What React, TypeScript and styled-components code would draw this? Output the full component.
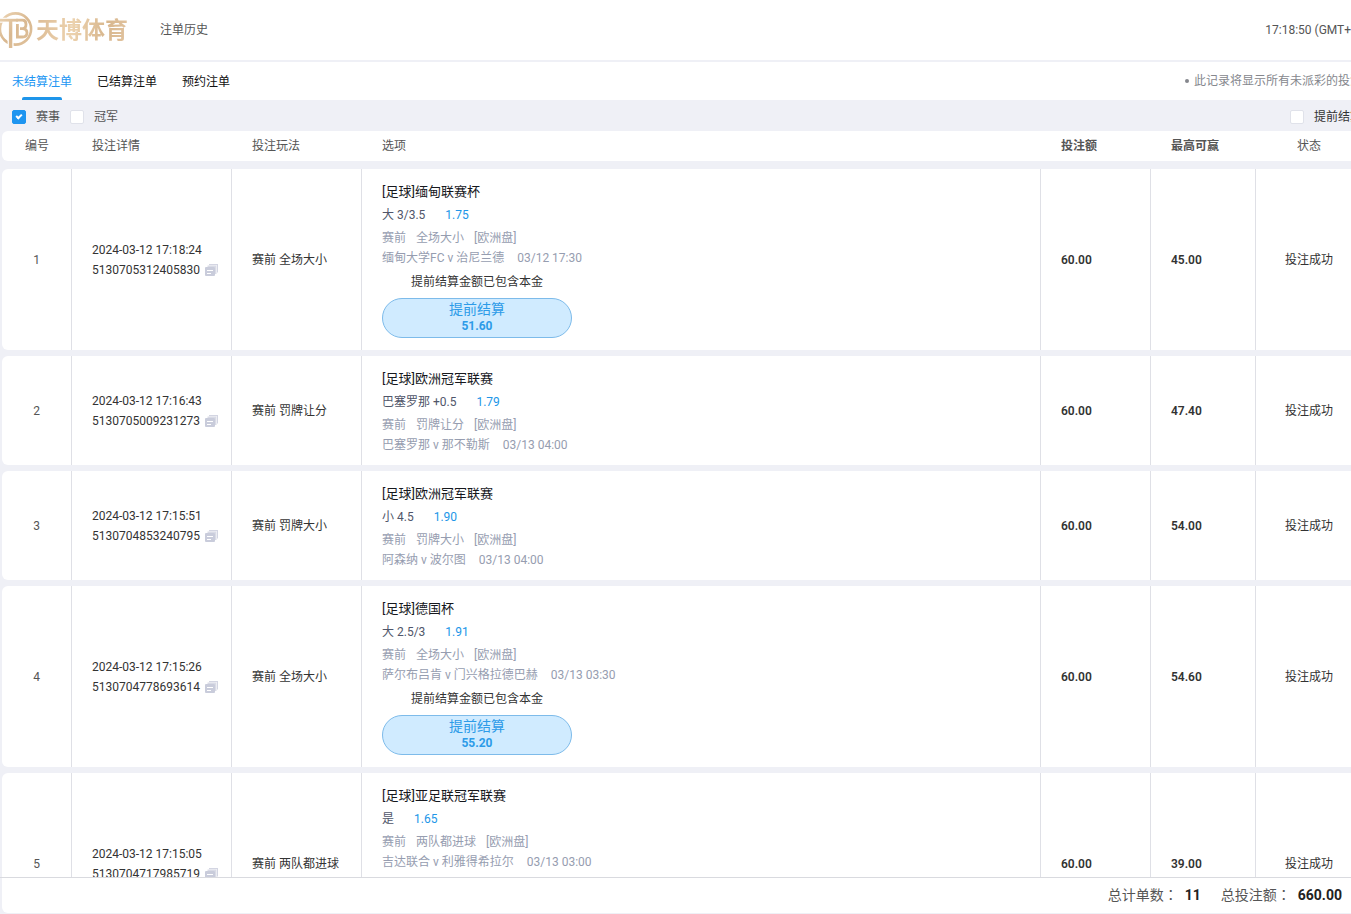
import React from "react";
import styled, { createGlobalStyle, css } from "styled-components";

const GlobalStyle = createGlobalStyle`
  *, *::before, *::after { box-sizing: border-box; }
  body {
    margin: 0;
    background: #eff0f6;
    color: #333;
    font: 12px/20px Roboto, "Noto Sans CJK SC", sans-serif;
  }
  button, input { font: inherit; }
`;

const Viewport = styled.div`
  height: 100vh;
  overflow: hidden;
`;

/* The sheet is slightly wider than the window and runs off its right edge. */
const Page = styled.div`
  display: flex;
  flex-direction: column;
  height: 100%;
  margin-right: -11px;
  padding-bottom: 1px;
  white-space: nowrap;
`;

const Header = styled.header`
  display: flex;
  align-items: center;
  flex: none;
  height: 60px;
  margin-bottom: 2px;
  background: #fff;
  color: #555;
`;

const Brand = styled.a`
  display: flex;
  align-items: center;
  width: 160px;
  text-decoration: none;
`;

const BrandMark = styled.svg`
  flex: none;
  width: 36px;
  height: 40px;
`;

const BrandName = styled.span`
  padding-bottom: 4px;
  font: 700 23px/30px "Noto Sans CJK SC", sans-serif;
  color: transparent;
  background: linear-gradient(100deg, #dcbb94, #ecd2ae 40%, #d8b78e 75%, #e2c4a0);
  background-clip: text;
`;

const PageTitle = styled.h1`
  flex: 1;
  margin: 0;
  font-size: 12px;
  font-weight: 400;
`;

const TabBar = styled.nav`
  display: flex;
  align-items: center;
  flex: none;
  gap: 25px;
  height: 38px;
  padding-left: 12px;
  background: #fff;
`;

const Tab = styled.button<{ $active?: boolean }>`
  display: flex;
  flex-direction: column;
  align-items: center;
  height: 38px;
  padding: 10px 0 0;
  border: 0;
  background: none;
  color: ${(p) => (p.$active ? "#2196f3" : "#111")};
  cursor: pointer;
  ${(p) =>
    p.$active &&
    css`
      &::after {
        content: "";
        width: 40px;
        height: 3px;
        margin-top: 5px;
        border-radius: 2px 2px 0 0;
        background: #1e95ea;
      }
    `}
`;

const Hint = styled.p`
  display: flex;
  align-items: center;
  gap: 5px;
  margin: 0 0 0 auto;
  color: #85878d;
  &::before {
    content: "";
    width: 4px;
    height: 4px;
    border-radius: 50%;
    background: #85878d;
  }
`;

const Filters = styled.div`
  display: flex;
  align-items: center;
  flex: none;
  gap: 10px;
  height: 31px;
  padding: 2px 0 0 12px;
`;

const CheckLabel = styled.label<{ $end?: boolean }>`
  display: flex;
  align-items: center;
  gap: 10px;
  margin-left: ${(p) => (p.$end ? "auto" : "0")};
  color: ${(p) => (p.$end ? "#333" : "#555")};
`;

const CheckBox = styled.input`
  appearance: none;
  display: grid;
  place-items: center;
  width: 14px;
  height: 14px;
  margin: 0;
  border: 1px solid #e0e2ea;
  border-radius: 2px;
  background: #fff;
  &:checked {
    border-color: #1e95f0;
    background: #1e95f0;
  }
  &:checked::after {
    content: "";
    width: 6px;
    height: 4px;
    margin-bottom: 2px;
    border: solid #fff;
    border-width: 0 0 2px 2px;
    transform: rotate(-45deg);
  }
`;

const Table = styled.table`
  display: flex;
  flex-direction: column;
  flex: 1;
  min-height: 0;
  padding-left: 2px;
`;

const TableHead = styled.thead`
  display: block;
  flex: none;
  margin-bottom: 8px;
`;

const TableBody = styled.tbody`
  display: flex;
  flex-direction: column;
  flex: 1;
  gap: 6px;
  min-height: 0;
  overflow: hidden;
`;

const Row = styled.tr`
  display: grid;
  grid-template-columns: 70px 160px 130px 1fr 110px 105px 106px;
  flex: none;
  border-radius: 6px;
  background: #fff;
`;

const HeadCell = styled.th<{ $center?: boolean; $strong?: boolean }>`
  padding: 5px ${(p) => (p.$center ? "0" : "20px")};
  color: #555;
  font-weight: ${(p) => (p.$strong ? 700 : 400)};
  text-align: ${(p) => (p.$center ? "center" : "left")};
`;

const Cell = styled.td<{ $center?: boolean; $strong?: boolean }>`
  display: flex;
  flex-direction: column;
  justify-content: center;
  align-items: ${(p) => (p.$center ? "center" : "flex-start")};
  padding: 0 ${(p) => (p.$center ? "0" : "20px")};
  border-right: 1px solid #dfe0e6;
  font-weight: ${(p) => (p.$strong ? 600 : 400)};
  &:last-child {
    border-right: 0;
  }
`;

const IndexCell = styled(Cell)`
  color: #555;
`;

const SelectionCell = styled(Cell)`
  padding-top: 10px;
  padding-bottom: 10px;
`;

const Ticket = styled.div`
  display: flex;
  align-items: center;
  gap: 5px;
`;

const CopyButton = styled.button`
  display: flex;
  padding: 0;
  border: 0;
  background: none;
  cursor: pointer;
`;

const League = styled.strong`
  color: #16181d;
  font-size: 13px;
  font-weight: 400;
  line-height: 26px;
`;

const Pick = styled.div`
  display: flex;
  gap: 20px;
  margin-bottom: 3px;
  color: #50566a;
`;

const Odds = styled.span`
  color: #2196e8;
`;

const Meta = styled.div<{ $wide?: boolean }>`
  display: flex;
  gap: ${(p) => (p.$wide ? "13px" : "10px")};
  color: #969db0;
`;

const CashOutSlot = styled.div`
  display: flex;
  flex-direction: column;
  align-items: center;
  gap: 6px;
  width: 190px;
  height: 72px;
  padding-top: 4px;
`;

const CashOutButton = styled.button`
  display: flex;
  flex-direction: column;
  align-items: center;
  width: 100%;
  height: 40px;
  padding: 2px 0;
  border: 1px solid #7dbbea;
  border-radius: 20px;
  background: #d0ebff;
  color: #2d9be8;
  font-size: 14px;
  line-height: 17px;
  cursor: pointer;
  b {
    font-size: 12px;
    line-height: 16px;
  }
`;

const Footer = styled.footer`
  flex: none;
  border-top: 1px solid #d9dadf;
  padding-left: 2px;
`;

const Totals = styled.dl`
  display: flex;
  align-items: center;
  justify-content: flex-end;
  gap: 20px;
  height: 35px;
  margin: 0;
  padding: 0 20px 2px 0;
  border-radius: 0 0 6px 6px;
  background: #fff;
  font-size: 14px;
`;

const Total = styled.div`
  display: flex;
  gap: 7px;
  dt {
    color: #555;
  }
  dd {
    margin: 0;
    color: #222;
    font-weight: 700;
  }
`;

/* Full-width colon set in the middle of its square. */
const Colon = styled.span`
  font-family: "Noto Sans CJK TC", sans-serif;
  line-height: 0;
`;

type Bet = {
  time: string;
  ticket: string;
  market: string;
  league: string;
  pick: string;
  odds: string;
  match: string;
  kickoff: string;
  win: string;
  settleable?: boolean;
  cashOut?: string;
};

const bets: Bet[] = [
  { time: "2024-03-12 17:18:24", ticket: "5130705312405830", market: "全场大小", league: "缅甸联赛杯", pick: "大 3/3.5", odds: "1.75", match: "缅甸大学FC v 治尼兰德", kickoff: "03/12 17:30", win: "45.00", settleable: true, cashOut: "51.60" },
  { time: "2024-03-12 17:16:43", ticket: "5130705009231273", market: "罚牌让分", league: "欧洲冠军联赛", pick: "巴塞罗那 +0.5", odds: "1.79", match: "巴塞罗那 v 那不勒斯", kickoff: "03/13 04:00", win: "47.40" },
  { time: "2024-03-12 17:15:51", ticket: "5130704853240795", market: "罚牌大小", league: "欧洲冠军联赛", pick: "小 4.5", odds: "1.90", match: "阿森纳 v 波尔图", kickoff: "03/13 04:00", win: "54.00" },
  { time: "2024-03-12 17:15:26", ticket: "5130704778693614", market: "全场大小", league: "德国杯", pick: "大 2.5/3", odds: "1.91", match: "萨尔布吕肯 v 门兴格拉德巴赫", kickoff: "03/13 03:30", win: "54.60", settleable: true, cashOut: "55.20" },
  { time: "2024-03-12 17:15:05", ticket: "5130704717985719", market: "两队都进球", league: "亚足联冠军联赛", pick: "是", odds: "1.65", match: "吉达联合 v 利雅得希拉尔", kickoff: "03/13 03:00", win: "39.00", settleable: true },
];

const Logo = () => (
  <BrandMark viewBox="0 10 36 40" aria-hidden="true">
    <defs>
      <linearGradient id="gold" gradientUnits="userSpaceOnUse" x1="0" y1="12" x2="32" y2="48">
        <stop offset="0" stopColor="#ecd4b3" />
        <stop offset="0.5" stopColor="#d9b890" />
        <stop offset="1" stopColor="#e0c29c" />
      </linearGradient>
    </defs>
    <g fill="none" stroke="url(#gold)">
      <circle cx="15.500" cy="29" r="15.600" strokeWidth="2.600" />
      <path d="M-1 20.200H18" stroke="#fff" strokeWidth="5" />
      <path d="M10.600 22V49" stroke="#fff" strokeWidth="6" />
      <path d="M-1 20.200H18" strokeWidth="2.800" />
      <path d="M10.600 20V48" strokeWidth="3.400" />
      <path d="M17.400 38V24M16 20.200H22.500Q26 20.200 26 24.200Q26 28.600 22.500 28.600H20M22.500 28.600Q27 28.900 27 32.800Q27 37 22.500 37H16" strokeWidth="2.800" />
    </g>
  </BrandMark>
);

const CopyIcon = () => (
  <svg width="13" height="14" viewBox="0 0 13 14" aria-hidden="true">
    <path d="M4 1H13V9.500H12V2.200H4Z" fill="#d3d5e2" />
    <path d="M2.500 2.500H11.500V11H9.500V4.500H2.500Z" fill="#d9dbe6" />
    <rect x="0" y="4" width="10" height="9" rx="1" fill="#c9ccdb" />
    <path d="M2 7.500H8M2 10.500H6" stroke="#fff" />
  </svg>
);

const BetRow = ({ bet, index }: { bet: Bet; index: number }) => (
  <Row>
    <IndexCell $center>{index}</IndexCell>
    <Cell>
      <span>{bet.time}</span>
      <Ticket>
        {bet.ticket}
        <CopyButton type="button" aria-label="复制">
          <CopyIcon />
        </CopyButton>
      </Ticket>
    </Cell>
    <Cell>赛前 {bet.market}</Cell>
    <SelectionCell>
      <League>[足球]{bet.league}</League>
      <Pick>
        <span>{bet.pick}</span>
        <Odds>{bet.odds}</Odds>
      </Pick>
      <Meta>
        <span>赛前</span>
        <span>{bet.market}</span>
        <span>[欧洲盘]</span>
      </Meta>
      <Meta $wide>
        <span>{bet.match}</span>
        <span>{bet.kickoff}</span>
      </Meta>
      {bet.settleable && (
        <CashOutSlot>
          {bet.cashOut && (
            <>
              <span>提前结算金额已包含本金</span>
              <CashOutButton type="button">
                提前结算
                <b>{bet.cashOut}</b>
              </CashOutButton>
            </>
          )}
        </CashOutSlot>
      )}
    </SelectionCell>
    <Cell $strong>60.00</Cell>
    <Cell $strong>{bet.win}</Cell>
    <Cell $center>投注成功</Cell>
  </Row>
);

export default function App() {
  return (
    <>
      <GlobalStyle />
      <Viewport>
        <Page>
          <Header>
            <Brand href="#">
              <Logo />
              <BrandName>天博体育</BrandName>
            </Brand>
            <PageTitle>注单历史</PageTitle>
            <time>17:18:50 (GMT+8)</time>
          </Header>
          <TabBar>
            <Tab type="button" $active>未结算注单</Tab>
            <Tab type="button">已结算注单</Tab>
            <Tab type="button">预约注单</Tab>
            <Hint>此记录将显示所有未派彩的投注</Hint>
          </TabBar>
          <Filters>
            <CheckLabel>
              <CheckBox type="checkbox" defaultChecked />
              赛事
            </CheckLabel>
            <CheckLabel>
              <CheckBox type="checkbox" />
              冠军
            </CheckLabel>
            <CheckLabel $end>
              <CheckBox type="checkbox" />
              提前结算
            </CheckLabel>
          </Filters>
          <Table>
            <TableHead>
              <Row>
                <HeadCell $center>编号</HeadCell>
                <HeadCell>投注详情</HeadCell>
                <HeadCell>投注玩法</HeadCell>
                <HeadCell>选项</HeadCell>
                <HeadCell $strong>投注额</HeadCell>
                <HeadCell $strong>最高可赢</HeadCell>
                <HeadCell $center>状态</HeadCell>
              </Row>
            </TableHead>
            <TableBody>
              {bets.map((bet, i) => (
                <BetRow key={bet.ticket} bet={bet} index={i + 1} />
              ))}
            </TableBody>
          </Table>
          <Footer>
            <Totals>
              <Total>
                <dt>总计单数<Colon>：</Colon></dt>
                <dd>11</dd>
              </Total>
              <Total>
                <dt>总投注额<Colon>：</Colon></dt>
                <dd>660.00</dd>
              </Total>
            </Totals>
          </Footer>
        </Page>
      </Viewport>
    </>
  );
}
